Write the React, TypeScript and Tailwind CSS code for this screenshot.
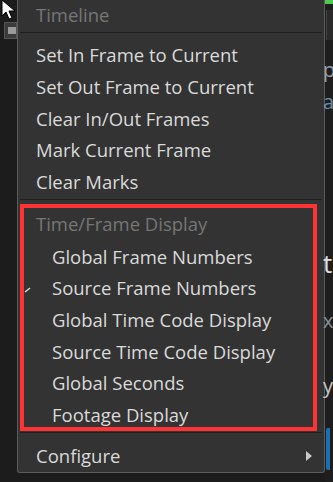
import React from "react";

const Item = ({ label, indent = false, check = false }: { label: string; indent?: boolean; check?: boolean }) => (
  <div className={`relative h-[32px] flex items-center ${indent ? "pl-[34px]" : "pl-[18px]"}`}>
    {check && (
      <svg className="absolute left-[6px] top-[13px]" width="8" height="8" viewBox="0 0 8 8">
        <path d="M1 6 L6 2" stroke="#e6e6e6" strokeWidth="1.3" fill="none" />
      </svg>
    )}
    <span>{label}</span>
  </div>
);

const Sep = ({ className = "" }: { className?: string }) => (
  <div className={`mx-[2px] h-px bg-[#1f1f1f] ${className}`} />
);

const App = () => {
  return (
    <div
      className="w-[333px] h-[482px] bg-[#1c1c1c] flex overflow-hidden text-[18.5px] leading-none text-[#dadada]"
      style={{ fontFamily: '"Open Sans", "Noto Sans", sans-serif' }}
    >
      {/* left strip: window behind the menu */}
      <div className="relative w-[17px] shrink-0">
        <div className="absolute left-[4px] top-[22px] w-[13px] h-[17px] bg-[#3a3a3a] border border-[#555]">
          <div className="ml-[3px] mt-[4px] w-[8px] h-[7px] bg-[#9a9a9a]" />
        </div>
        <svg className="absolute left-0 top-0" width="18" height="24" viewBox="0 0 18 24">
          <path d="M2 0 L2 16 L6 12 L9 19 L12 18 L9 11 L15 11 Z" fill="#fff" stroke="#000" strokeWidth="1" />
        </svg>
      </div>

      {/* menu */}
      <div className="relative w-[308px] h-[473px] shrink-0 bg-[#333333] border-x border-b border-[#5c5c5c] rounded-b-[3px] flex flex-col">
        <div className="h-[30px] flex items-center pl-[18px] text-[#767676]">Timeline</div>
        <Sep className="mt-[2px] mb-[7px]" />
        <Item label="Set In Frame to Current" />
        <Item label="Set Out Frame to Current" />
        <Item label="Clear In/Out Frames" />
        <Item label="Mark Current Frame" />
        <Item label="Clear Marks" />
        <Sep className="mt-[1px] mb-[7px]" />
        <div className="h-[34px] flex items-center pl-[18px] text-[#767676]">Time/Frame Display</div>
        <Item label="Global Frame Numbers" indent />
        <Item label="Source Frame Numbers" indent check />
        <Item label="Global Time Code Display" indent />
        <Item label="Source Time Code Display" indent />
        <Item label="Global Seconds" indent />
        <Item label="Footage Display" indent />
        <Sep className="mt-[1px] mb-[7px]" />
        <div className="h-[32px] flex items-center justify-between pl-[18px] pr-[12px]">
          <span>Configure</span>
          <svg width="6" height="10" viewBox="0 0 6 10">
            <path d="M0 0 L6 5 L0 10 Z" fill="#c8c8c8" />
          </svg>
        </div>

        {/* red highlight annotation */}
        <div className="absolute left-[2px] top-[204px] w-[297px] h-[227px] border-[4px] border-[#ff3333]" />
      </div>

      {/* right strip: window behind the menu */}
      <div className="relative flex-1 bg-[#1e1e1e] text-[20px] text-[#9aa0a6]">
        <div className="absolute left-0 top-0 w-full h-[4px] bg-[#4fc94f]" />
        <div className="absolute left-[1px] top-[10px] w-full h-[30px] bg-[#2a2a2a] border-l border-[#444]" />
        <div className="absolute left-[-2px] top-[60px]">p</div>
        <div className="absolute left-[-2px] top-[92px] text-[#6a8fb0]">a</div>
        <div className="absolute left-[-2px] top-[250px] text-[26px] text-[#e0e0e0]">t</div>
        <div className="absolute left-[-2px] top-[311px] text-[#8a9098]">x</div>
        <div className="absolute left-[-2px] top-[376px] text-[#c8c8c8]">y</div>
        <div className="absolute left-[1px] top-[428px] w-[4px] h-[42px] bg-[#1c6fb0] rounded-l-[2px]" />
      </div>
    </div>
  );
};

export default App;
